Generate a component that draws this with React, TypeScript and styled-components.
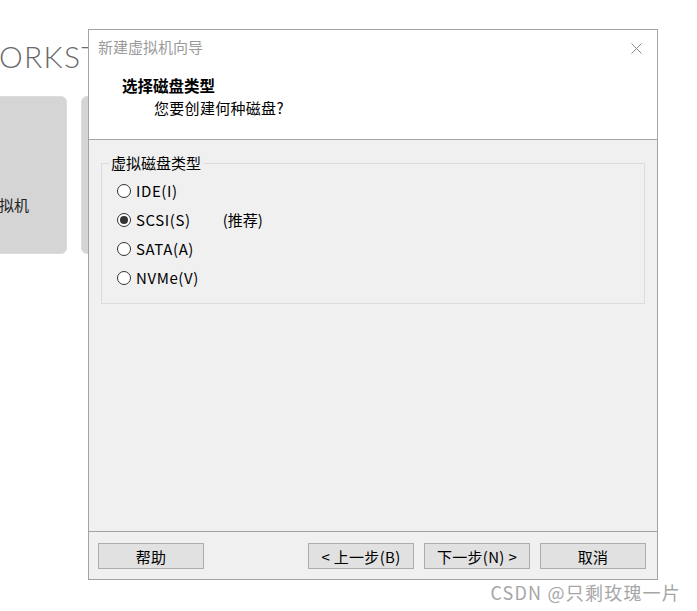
import React from "react";
import styled, { createGlobalStyle } from "styled-components";

const GlobalStyle = createGlobalStyle`
  html, body { margin: 0; padding: 0; background: #ffffff; }
  body { width: 697px; height: 611px; overflow: hidden; font-family: "Noto Sans CJK SC", "Noto Sans", sans-serif; }
  * { box-sizing: border-box; }
`;

const Desktop = styled.div`
  position: relative;
  width: 697px;
  height: 611px;
  overflow: hidden;
  background: #ffffff;
`;

const BackApp = styled.div`
  display: flex;
  flex-direction: column;
  padding-top: 38px;
`;

const Brand = styled.div`
  font-family: "Lato", "Open Sans", sans-serif;
  font-weight: 300;
  font-size: 30px;
  line-height: 36px;
  color: #6a6a6a;
  letter-spacing: 1.3px;
  margin-left: -1px;
`;

const CardRow = styled.div`
  display: flex;
  gap: 14px;
  margin-top: 22px;
  margin-left: -93px;
`;

const Card = styled.div`
  width: 160px;
  height: 158px;
  background: #d5d5d5;
  border: 1px solid #dcdcdc;
  border-radius: 6px;
  padding-top: 98px;
  padding-left: 91px;
  font-size: 15px;
  line-height: 20px;
  color: #222;
`;

const Dialog = styled.div`
  position: absolute;
  left: 88px;
  top: 29px;
  width: 570px;
  height: 551px;
  border: 1px solid #a3a3a3;
  background: #f0f0f0;
  display: flex;
  flex-direction: column;
`;

const Header = styled.div`
  height: 110px;
  background: #ffffff;
  border-bottom: 1px solid #a3a3a3;
  display: flex;
  flex-direction: column;
`;

const TitleBar = styled.div`
  height: 34px;
  display: flex;
  align-items: center;
  justify-content: space-between;
  padding: 0 15px 0 9px;
`;

const TitleText = styled.div`
  font-size: 15px;
  line-height: 20px;
  color: #9b9b9b;
`;

const CloseBtn = styled.div`
  width: 11px;
  height: 11px;
  display: flex;
  margin-top: 3px;
`;

const HeadTitle = styled.div`
  margin-top: 11px;
  margin-left: 33px;
  font-size: 15.5px;
  font-weight: 700;
  line-height: 20px;
  color: #000;
`;

const HeadSub = styled.div`
  margin-top: 3px;
  margin-left: 65px;
  font-size: 15px;
  line-height: 20px;
  color: #000;
  letter-spacing: 0.3px;
`;

const Body = styled.div`
  flex: 1;
  padding-top: 13px;
`;

const Group = styled.fieldset`
  margin: 0 12px;
  padding: 3px 0 11px 15px;
  border: 1px solid #dcdcdc;
  min-width: 0;
`;

const Legend = styled.legend`
  font-size: 15px;
  line-height: 20px;
  padding: 0 2px;
  margin-left: -8px;
  color: #000;
`;

const RadioRow = styled.div`
  height: 29px;
  display: flex;
  align-items: center;
  font-size: 15px;
  letter-spacing: 0.6px;
  color: #000;
`;

const RadioCircle = styled.span<{ $checked?: boolean }>`
  width: 14px;
  height: 14px;
  border-radius: 50%;
  border: 1px solid #333;
  background: #fff;
  display: flex;
  align-items: center;
  justify-content: center;
  margin-right: 5px;
  &::after {
    content: "";
    width: 8px;
    height: 8px;
    border-radius: 50%;
    background: ${(p) => (p.$checked ? "#333" : "transparent")};
  }
`;

const Recommend = styled.span`
  margin-left: 32px;
  letter-spacing: 0;
`;

const Footer = styled.div`
  height: 48px;
  border-top: 1px solid #a3a3a3;
  display: flex;
  align-items: flex-start;
  padding: 11px 11px 0 9px;
  gap: 10px;
`;

const Button = styled.div<{ $push?: boolean }>`
  width: 106px;
  height: 26px;
  background: #e1e1e1;
  border: 1px solid #adadad;
  display: flex;
  align-items: center;
  justify-content: center;
  font-size: 15px;
  letter-spacing: 0.3px;
  color: #000;
  white-space: pre;
  margin-left: ${(p) => (p.$push ? "auto" : "0")};
`;

const Watermark = styled.div`
  position: absolute;
  right: 16px;
  top: 579px;
  font-size: 18px;
  line-height: 26px;
  letter-spacing: 1.2px;
  color: #a6a6a6;
`;

export default function App() {
  const options = [
    { label: "IDE(I)", checked: false },
    { label: "SCSI(S)", checked: true, note: "(推荐)" },
    { label: "SATA(A)", checked: false },
    { label: "NVMe(V)", checked: false },
  ];
  return (
    <>
      <GlobalStyle />
      <Desktop>
        <BackApp>
          <Brand>ORKST</Brand>
          <CardRow>
            <Card>拟机</Card>
            <Card />
          </CardRow>
        </BackApp>
        <Dialog>
          <Header>
            <TitleBar>
              <TitleText>新建虚拟机向导</TitleText>
              <CloseBtn>
                <svg width="11" height="11" viewBox="0 0 11 11">
                  <path d="M0.5 0.5L10.5 10.5M10.5 0.5L0.5 10.5" stroke="#8a8a8a" strokeWidth="1" fill="none" />
                </svg>
              </CloseBtn>
            </TitleBar>
            <HeadTitle>选择磁盘类型</HeadTitle>
            <HeadSub>您要创建何种磁盘?</HeadSub>
          </Header>
          <Body>
            <Group>
              <Legend>虚拟磁盘类型</Legend>
              {options.map((o) => (
                <RadioRow key={o.label}>
                  <RadioCircle $checked={o.checked} />
                  <span>{o.label}</span>
                  {o.note && <Recommend>{o.note}</Recommend>}
                </RadioRow>
              ))}
            </Group>
          </Body>
          <Footer>
            <Button>帮助</Button>
            <Button $push>{"< 上一步(B)"}</Button>
            <Button>{"下一步(N) >"}</Button>
            <Button>取消</Button>
          </Footer>
        </Dialog>
        <Watermark>CSDN @只剩玫瑰一片</Watermark>
      </Desktop>
    </>
  );
}
